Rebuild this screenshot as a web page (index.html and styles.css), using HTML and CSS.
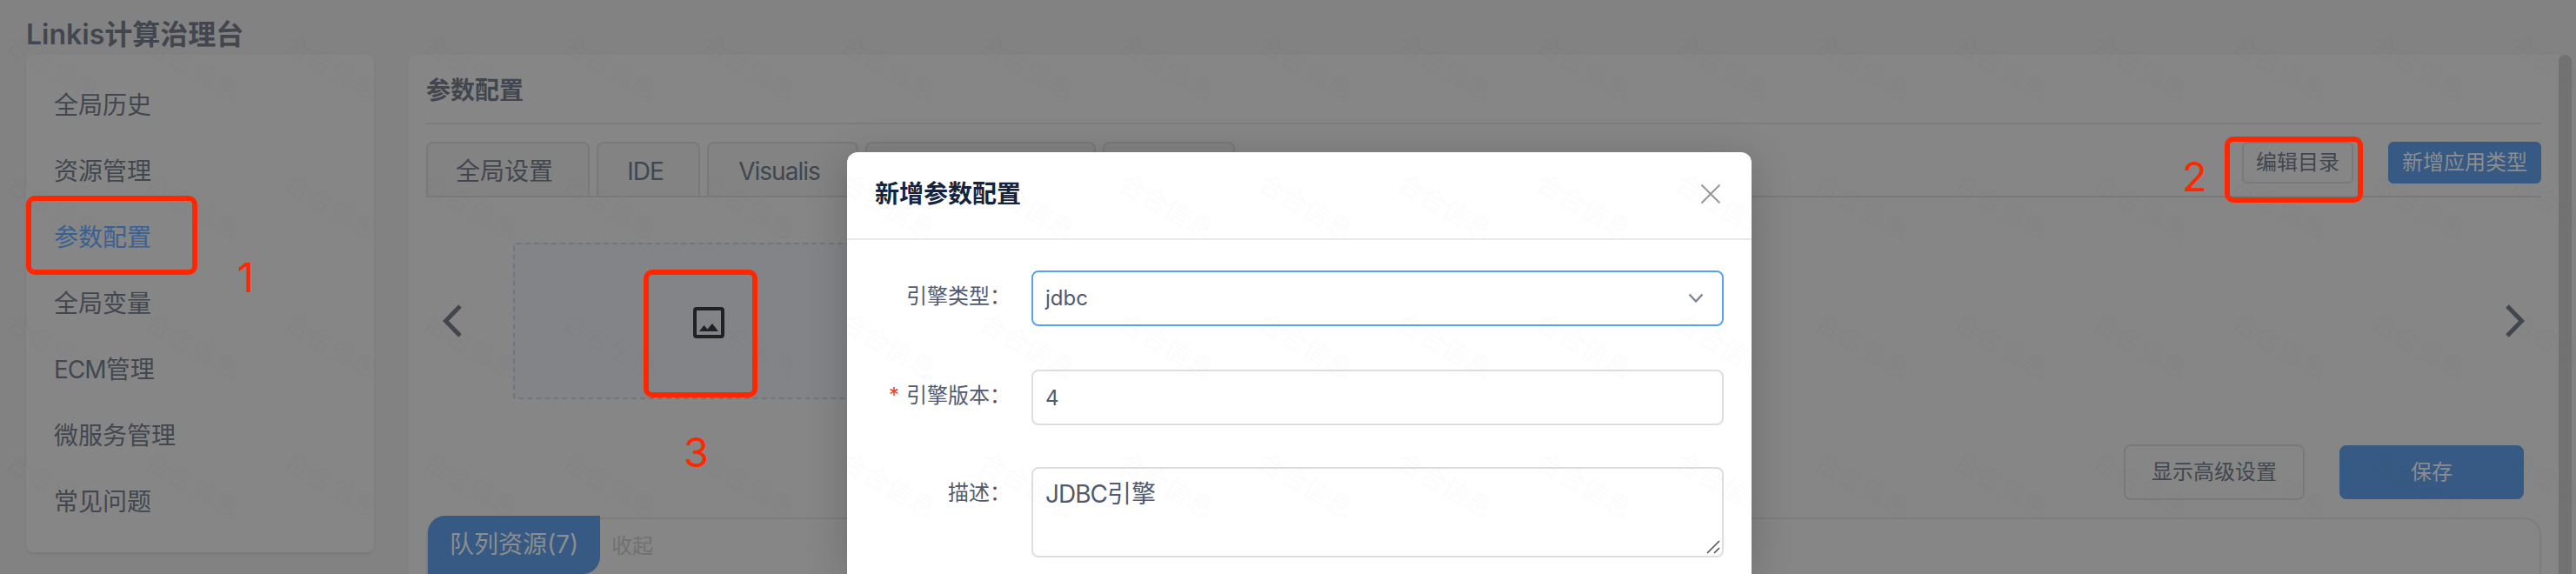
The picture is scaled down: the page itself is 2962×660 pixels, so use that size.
FILE: index.html
```html
<!DOCTYPE html>
<html lang="zh-CN">
<head>
<meta charset="utf-8">
<title>Linkis计算治理台</title>
<link rel="stylesheet" href="styles.css">
</head>
<body>
<div class="stage">
<div class="app">
  <h1 class="app-title">Linkis计算治理台</h1>
  <div class="layout">
    <nav class="sidebar">
      <a class="nav-item">全局历史</a>
      <a class="nav-item">资源管理</a>
      <a class="nav-item active">参数配置</a>
      <a class="nav-item">全局变量</a>
      <a class="nav-item"><span class="latin">ECM</span>管理</a>
      <a class="nav-item">微服务管理</a>
      <a class="nav-item">常见问题</a>
    </nav>
    <main class="content">
      <h2 class="content-title">参数配置</h2>
      <div class="tabs">
        <div class="tab tab-global">全局设置</div>
        <div class="tab tab-ide"><span class="latin">IDE</span></div>
        <div class="tab tab-visualis"><span class="latin">Visualis</span></div>
        <div class="tab tab-wide"></div>
        <div class="tab tab-last"></div>
        <div class="tab-actions">
          <button class="btn small btn-edit">编辑目录</button>
          <button class="btn small primary btn-add">新增应用类型</button>
        </div>
      </div>
      <div class="carousel">
        <svg class="arrow" width="22" height="38" viewBox="0 0 22 38"><path d="M20 2 3.500 19 20 36"/></svg>
        <div class="engine-card">
          <svg width="36" height="36" viewBox="0 0 36 36"><rect x="2" y="2" width="32" height="32" rx="2" fill="none" stroke="#212121" stroke-width="4"/><path d="M7 28 12.500 21 16.500 25.500 22 19 29 28Z" fill="#212121"/></svg>
        </div>
        <svg class="arrow arrow-right" width="22" height="38" viewBox="0 0 22 38"><path d="M2 2 18.500 19 2 36"/></svg>
      </div>
      <div class="form-actions">
        <button class="btn btn-advanced">显示高级设置</button>
        <button class="btn primary btn-save">保存</button>
      </div>
      <section class="queue">
        <div class="queue-tag">队列资源(7)</div>
        <div class="queue-toggle">收起</div>
      </section>
    </main>
    <div class="scrollbar"></div>
  </div>
</div>

<div class="modal">
  <header class="modal-head">
    <h3 class="modal-title">新增参数配置</h3>
    <svg width="24" height="24" viewBox="0 0 24 24"><path d="M1.500 1.500 22.500 22.500M22.500 1.500 1.500 22.500" stroke="#999" stroke-width="2" fill="none"/></svg>
  </header>
  <div class="modal-body">
    <div class="row">
      <label class="label">引擎类型：</label>
      <div class="field select"><span>jdbc</span><svg width="18" height="12" viewBox="0 0 18 12"><path d="M1.500 1.500 9 9.500 16.500 1.500" stroke="#808695" stroke-width="2.500" fill="none"/></svg></div>
    </div>
    <div class="row">
      <label class="label required">引擎版本：</label>
      <div class="field">4</div>
    </div>
    <div class="row">
      <label class="label">描述：</label>
      <div class="field area"><span class="latin">JDBC</span>引擎<svg class="grip" width="16" height="16" viewBox="0 0 16 16"><path d="M1 15 15 1M9 15 15 9" stroke="#555" stroke-width="1.600"/></svg></div>
    </div>
  </div>
</div>

<svg class="watermark" width="2962" height="660">
  <defs>
    <pattern id="mark" x="0" y="20" width="160" height="160" patternUnits="userSpaceOnUse">
      <text class="mark-text" transform="translate(4 37) rotate(30)">合合信息</text>
    </pattern>
  </defs>
  <rect y="20" width="2962" height="640" fill="url(#mark)"/>
</svg>

<div class="box box-menu"></div>
<div class="box box-edit"></div>
<div class="box box-icon"></div>
<div class="step step-1">1</div>
<div class="step step-2">2</div>
<div class="step step-3">3</div>
</div>
</body>
</html>
```

FILE: styles.css
```css
* { box-sizing: border-box; }
body {
  margin: 0;
  background: #828282;
  color: #42464f;
  font-family: Inter, "Noto Sans CJK SC", sans-serif;
  font-size: 28px;
}
h1, h2, h3 { margin: 0; }
.latin { letter-spacing: -.035em; }

.stage { position: relative; width: 2962px; height: 660px; overflow: hidden; }
.app { height: 660px; }
.app-title {
  height: 63px;
  padding: 16px 0 0 30px;
  font-size: 32px;
  line-height: 47px;
  font-weight: 600;
}
.layout { display: flex; align-items: flex-start; padding-left: 30px; }

.sidebar {
  width: 400px;
  height: 572px;
  padding-top: 20px;
  border-radius: 8px;
  background: #868686;
  box-shadow: 0 2px 3px rgba(0, 0, 0, .08);
}
.nav-item { display: block; height: 76px; line-height: 76px; padding-left: 32px; }
.nav-item.active { color: #3a6093; }

.content {
  width: 2472px;
  height: 597px;
  margin-left: 40px;
  padding: 0 20px;
  border-radius: 8px 0 0 0;
  background: #868686;
}
.content-title {
  height: 80px;
  border-bottom: 2px solid #7c7c7c;
  font-size: 28px;
  line-height: 82px;
  font-weight: 600;
}

.tabs {
  display: flex;
  gap: 8px;
  height: 64px;
  margin-top: 20px;
  border-bottom: 2px solid #797979;
}
.tab {
  height: 62px;
  border: 2px solid #797979;
  border-bottom: 0;
  border-radius: 8px 8px 0 0;
  background: #838383;
  line-height: 64px;
  text-align: center;
}
.tab-global { width: 188px; padding-right: 8px; }
.tab-ide { width: 119px; padding-right: 7px; }
.tab-visualis { width: 174px; padding-right: 8px; }
.tab-wide { width: 265px; }
.tab-last { width: 152px; }
.tab-actions { display: flex; gap: 40px; margin-left: auto; }

.btn {
  height: 64px;
  padding: 0;
  border: 2px solid #797979;
  border-radius: 8px;
  background: #868686;
  color: #42464f;
  font: 24px/58px Inter, "Noto Sans CJK SC", sans-serif;
}
.btn.small { height: 48px; line-height: 42px; border-radius: 6px; }
.btn.primary { border-color: #375a84; background: #375a84; color: #8b8d8f; }
.btn-edit { width: 128px; }
.btn-add { width: 176px; }
.btn-advanced { width: 208px; }
.btn.btn-save { width: 212px; height: 62px; }

.carousel {
  display: flex;
  align-items: center;
  height: 180px;
  margin-top: 52px;
  padding: 0 19px;
}
.arrow { fill: none; stroke: #42464f; stroke-width: 5; }
.arrow-right { margin-left: auto; }
.engine-card {
  display: flex;
  align-items: center;
  justify-content: center;
  width: 450px;
  height: 180px;
  margin-left: 59px;
  padding-top: 4px;
  border: 2px dashed #71757d;
  border-radius: 4px;
  background: #828487;
}

.form-actions {
  display: flex;
  align-items: center;
  justify-content: flex-end;
  gap: 40px;
  margin-top: 52px;
  padding-right: 20px;
}

.queue {
  display: flex;
  height: 65px;
  margin-top: 20px;
  border: 2px solid #7d7d7d;
  border-bottom: 0;
  border-radius: 20px 20px 0 0;
}
.queue-tag {
  width: 198px;
  height: 67px;
  margin-top: -4px;
  padding-left: 25px;
  border-radius: 20px 0 20px 0;
  background: #375a84;
  color: #8b8d8f;
  line-height: 67px;
  white-space: nowrap;
}
.queue-toggle { padding-left: 13px; color: #717171; font-size: 24px; line-height: 62px; }

.scrollbar { width: 15px; height: 597px; border-radius: 8px 8px 0 0; background: #727272; }

.modal {
  position: absolute;
  left: 974px;
  top: 175px;
  width: 1040px;
  height: 485px;
  border-radius: 12px 12px 0 0;
  background: #fff;
  color: #515a6e;
  box-shadow: 0 8px 48px rgba(0, 0, 0, .2);
}
.modal-head {
  display: flex;
  align-items: center;
  justify-content: space-between;
  height: 101px;
  padding: 0 35px 4px 32px;
  border-bottom: 2px solid #e8eaec;
}
.modal-title { color: #17233d; font-size: 28px; line-height: 40px; font-weight: 600; }
.modal-body { padding: 35px 32px 0 0; }
.row { display: flex; margin-bottom: 50px; }
.row:nth-child(2) { margin-bottom: 48px; }
.row:last-child { margin-bottom: 0; }
.label {
  width: 212px;
  padding-right: 24px;
  text-align: right;
  font-size: 24px;
  line-height: 60px;
}
.required::before { content: "*"; margin-right: 8px; color: #ed4014; }
.field {
  position: relative;
  flex: 1;
  height: 64px;
  padding: 0 14px;
  border: 2px solid #dcdee2;
  border-radius: 8px;
  font-size: 24px;
  line-height: 62px;
}
.select { display: flex; align-items: center; justify-content: space-between; padding-right: 21px; border-color: #57a3f3; }
.area { height: 104px; font-size: 28px; line-height: 58px; }
.grip { position: absolute; right: 2px; bottom: 2px; }

.watermark { position: absolute; left: 0; top: 0; pointer-events: none; }
.mark-text { font-size: 30px; font-family: "Noto Sans CJK SC", sans-serif; fill: #000; fill-opacity: .011; }

.box { position: absolute; border: 6px solid #ff2600; border-radius: 10px; }
.box-menu { left: 30px; top: 225px; width: 197px; height: 91px; }
.box-edit { left: 2558px; top: 157px; width: 159px; height: 76px; }
.box-icon { left: 740px; top: 310px; width: 131px; height: 147px; }
.step { position: absolute; color: #ff2600; font-size: 47px; line-height: 48px; }
.step-1 { left: 273px; top: 295px; }
.step-2 { left: 2509px; top: 179px; }
.step-3 { left: 786px; top: 496px; }
```
